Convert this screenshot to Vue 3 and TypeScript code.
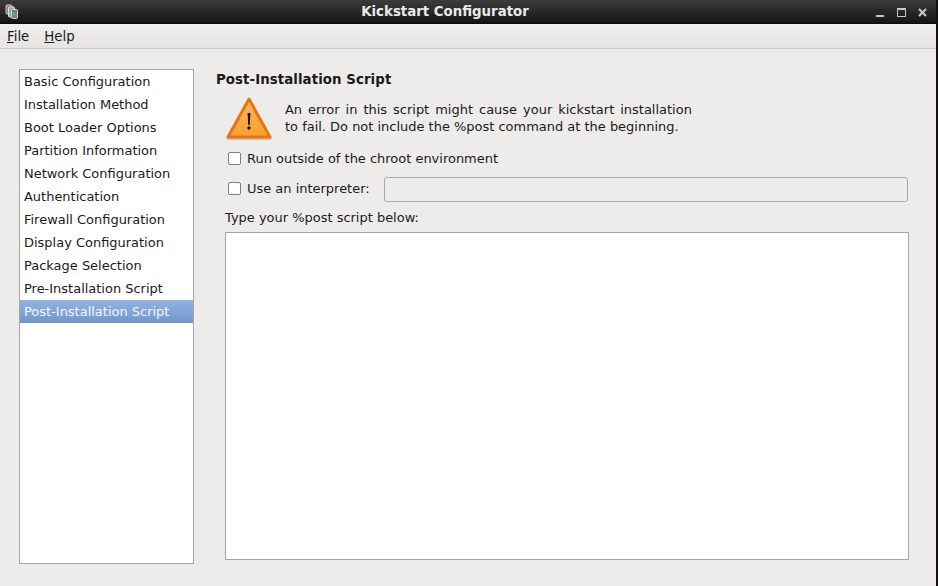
<script setup lang="ts">
const items: string[] = [
  'Basic Configuration',
  'Installation Method',
  'Boot Loader Options',
  'Partition Information',
  'Network Configuration',
  'Authentication',
  'Firewall Configuration',
  'Display Configuration',
  'Package Selection',
  'Pre-Installation Script',
  'Post-Installation Script',
]
const selected = 'Post-Installation Script'
</script>

<template>
  <div class="window">
    <header class="titlebar">
      <svg class="app-icon" width="16" height="18" viewBox="0 0 16 18">
        <rect x="2" y="2" width="6" height="9" rx="1" fill="#7f837f" stroke="#c9cbc7" stroke-width="1" />
        <rect x="4.5" y="4" width="6" height="10" rx="1" fill="#a4a7a2" stroke="#dcdeda" stroke-width="1" />
        <rect x="7.5" y="6.5" width="6" height="9" rx="1" fill="#7d817c" stroke="#d2d4d0" stroke-width="1" />
        <circle cx="10.5" cy="11" r="1.8" fill="#3fbf5a" />
      </svg>
      <span class="title">Kickstart Configurator</span>
      <div class="controls">
        <span class="min"></span>
        <span class="max"></span>
        <svg width="9" height="9" viewBox="0 0 9 9"><path d="M1 1 8 8M8 1 1 8" stroke="#c9c9c7" stroke-width="2" /></svg>
      </div>
    </header>
    <nav class="menubar">
      <span class="menu"><u>F</u>ile</span>
      <span class="menu"><u>H</u>elp</span>
    </nav>
    <main class="body">
      <ul class="list">
        <li v-for="item in items" :key="item" :class="{ sel: item === selected }">{{ item }}</li>
      </ul>
      <section class="panel">
        <h1>Post-Installation Script</h1>
        <div class="content">
          <div class="warning">
            <svg width="48" height="46" viewBox="0 0 48 46">
              <defs>
                <linearGradient id="tri" x1="0" y1="0" x2="0" y2="1">
                  <stop offset="0" stop-color="#fbb860" />
                  <stop offset="1" stop-color="#fb9f30" />
                </linearGradient>
              </defs>
              <path d="M24 3 L45 41 H3 Z" fill="#c8c8c4" transform="translate(0 1.5)" stroke="#c8c8c4" stroke-width="3" stroke-linejoin="round" />
              <path d="M24 3 L45 41 H3 Z" fill="url(#tri)" stroke="#e8760f" stroke-width="3" stroke-linejoin="round" />
              <path d="M22.6 17 H25.4 L24.8 29 H23.2 Z" fill="#1c1610" />
              <circle cx="24" cy="32" r="1.7" fill="#1c1610" />
            </svg>
            <p><span class="wide">An error in this script might cause your kickstart installation</span><br />to fail. Do not include the %post command at the beginning.</p>
          </div>
          <label class="check first"><span class="box"></span>Run outside of the chroot environment</label>
          <div class="interp">
            <label class="check shifted"><span class="box"></span>Use an interpreter:</label>
            <div class="entry"></div>
          </div>
          <div class="hint">Type your %post script below:</div>
          <div class="textarea"></div>
        </div>
      </section>
    </main>
  </div>
</template>

<style>
html, body { margin: 0; background: #edeceb; }
</style>

<style scoped>
.window {
  width: 938px;
  height: 586px;
  display: flex;
  flex-direction: column;
  background: #edeceb;
  color: #1a1a1a;
  font-family: "DejaVu Sans", sans-serif;
  font-size: 12.97px;
  overflow: hidden;
  box-sizing: border-box;
  border-right: 2px solid #111;
}
.titlebar {
  height: 23px;
  flex: none;
  position: relative;
  display: flex;
  align-items: center;
  justify-content: center;
  padding-right: 46px;
  background: linear-gradient(#3c3c3c, #141414);
  border-bottom: 1px solid #0c0c0c;
  box-sizing: content-box;
}
.app-icon { position: absolute; left: 4px; top: 3px; }
.title { color: #e9e9e7; font-weight: 700; font-size: 13.33px; }
.controls {
  position: absolute;
  right: 9px;
  top: 8px;
  display: flex;
  align-items: flex-end;
  gap: 12px;
  height: 9px;
}
.min { width: 8px; height: 2px; background: #c9c9c7; margin-right: 1px; }
.max { width: 7px; height: 6px; border: 1px solid #c9c9c7; border-top-width: 2px; }
.menubar {
  height: 24px;
  flex: none;
  display: flex;
  align-items: center;
  padding: 0 7px;
  gap: 15px;
  background: linear-gradient(#f0efee, #e6e5e3);
  border-bottom: 1px solid #c9c8c5;
  font-size: 13.33px;
}
.body { flex: 1; display: flex; padding: 20px 28px 22px 19px; min-height: 0; }
.list {
  list-style: none;
  margin: 0;
  padding: 0;
  width: 175px;
  box-sizing: border-box;
  background: #fff;
  border: 1px solid #a5a5a1;
  flex: none;
}
.list li {
  height: 23px;
  line-height: 23px;
  padding-left: 4px;
  white-space: nowrap;
}
.list li.sel {
  background: linear-gradient(#93b3e0, #7097cb);
  color: #f2f6fb;
}
.panel { flex: 1; margin-left: 22px; min-width: 0; display: flex; flex-direction: column; }
h1 { margin: 1px 0 0; font-size: 13.33px; font-weight: 700; line-height: 19px; letter-spacing: 0.08px; }
.content { flex: 1; display: flex; flex-direction: column; padding-left: 9px; min-height: 0; }
.warning { display: flex; height: 47px; align-items: flex-start; margin-top: 6px; }
.warning svg { flex: none; margin-top: 1px; }
.warning p { margin: 6px 0 0 12px; line-height: 17px; }
.wide { word-spacing: 1.9px; }
.check { display: flex; align-items: center; line-height: 17px; }
.shifted { margin-bottom: 2px; }
.first { margin-top: 8px; }
.box {
  width: 11px;
  height: 11px;
  border: 1px solid #7d7d7a;
  border-radius: 2px;
  background: #fff;
  margin: 0 6px 0 3px;
  flex: none;
}
.interp { display: flex; align-items: center; margin-top: 10px; height: 25px; }
.entry {
  flex: 1;
  height: 25px;
  box-sizing: border-box;
  margin-left: 14px;
  border: 1px solid #a9a9a5;
  border-radius: 3px;
  background: #edeceb;
}
.hint { margin-top: 7px; line-height: 17px; }
.textarea {
  flex: 1;
  margin-top: 6px;
  margin-bottom: 4px;
  background: #fff;
  border: 1px solid #a5a5a1;
  box-sizing: border-box;
  width: 684px;
}
</style>
